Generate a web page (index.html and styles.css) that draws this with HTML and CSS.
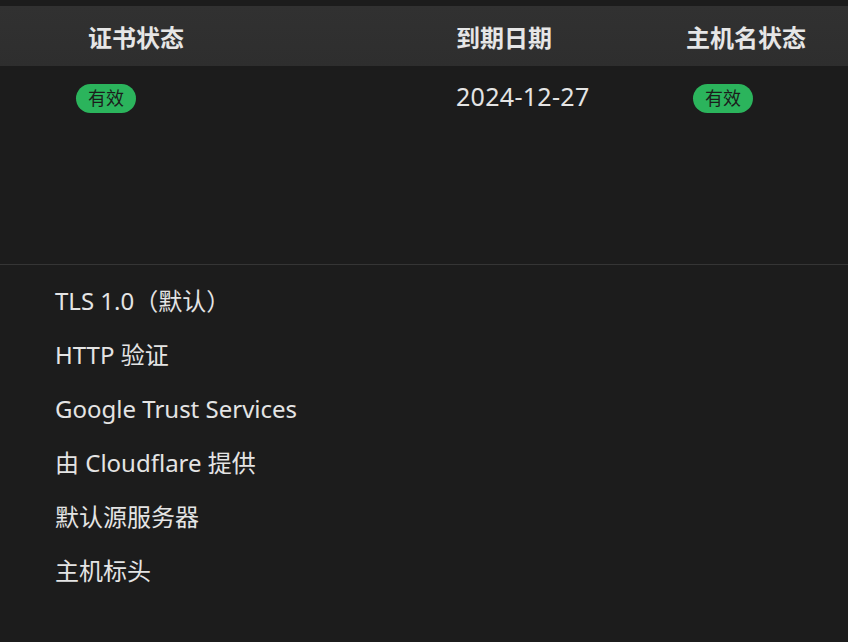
FILE: index.html
```html
<!DOCTYPE html>
<html lang="zh-CN">
<head>
<meta charset="utf-8">
<title>证书</title>
<link rel="stylesheet" href="styles.css">
</head>
<body>
<div class="page">
  <section class="cert-table">
    <div class="head">
      <div class="cell c1">证书状态</div>
      <div class="cell c2">到期日期</div>
      <div class="cell c3">主机名状态</div>
    </div>
    <div class="row">
      <div class="cell c1"><span class="badge">有效</span></div>
      <div class="cell c2 date">2024-12-27</div>
      <div class="cell c3"><span class="badge">有效</span></div>
    </div>
  </section>
  <ul class="details">
    <li>TLS 1.0（默认）</li>
    <li>HTTP 验证</li>
    <li>Google Trust Services</li>
    <li>由 Cloudflare 提供</li>
    <li>默认源服务器</li>
    <li>主机标头</li>
  </ul>
</div>
</body>
</html>
```
FILE: styles.css
```css
html, body {
  margin: 0;
  padding: 0;
  background: #1c1c1c;
}
body {
  font-family: "Noto Sans", "Noto Sans CJK SC", sans-serif;
  color: #e4e4e4;
  width: 848px;
  height: 642px;
  overflow: hidden;
}
.page {
  padding-top: 6px;
  background: #1c1c1c;
}
.cert-table {
  border-bottom: 1px solid #353535;
}
.head, .row {
  display: grid;
  grid-template-columns: 456px 230px 1fr;
}
.head {
  height: 60px;
  background: linear-gradient(#313131, #2e2e2e);
  align-items: center;
  font-weight: 700;
  font-size: 24px;
  color: #e6e6e6;
}
.head .c1 { padding-left: 88px; }
.row {
  height: 198px;
  align-items: start;
  padding-top: 18px;
  box-sizing: border-box;
}
.row .c1 { padding-left: 76px; }
.row .c3 { padding-left: 7px; }
.date {
  font-size: 25px;
  line-height: 25px;
  letter-spacing: 0.3px;
  color: #e4e4e4;
}
.badge {
  display: inline-block;
  width: 60px;
  height: 29px;
  line-height: 29px;
  border-radius: 15px;
  background: #2bb45c;
  color: #1c1c1c;
  font-size: 18px;
  text-align: center;
}
.details {
  list-style: none;
  margin: 0;
  padding: 9px 0 0 55px;
}
.details li {
  font-size: 24px;
  line-height: 54px;
  color: #e4e4e4;
}
```
